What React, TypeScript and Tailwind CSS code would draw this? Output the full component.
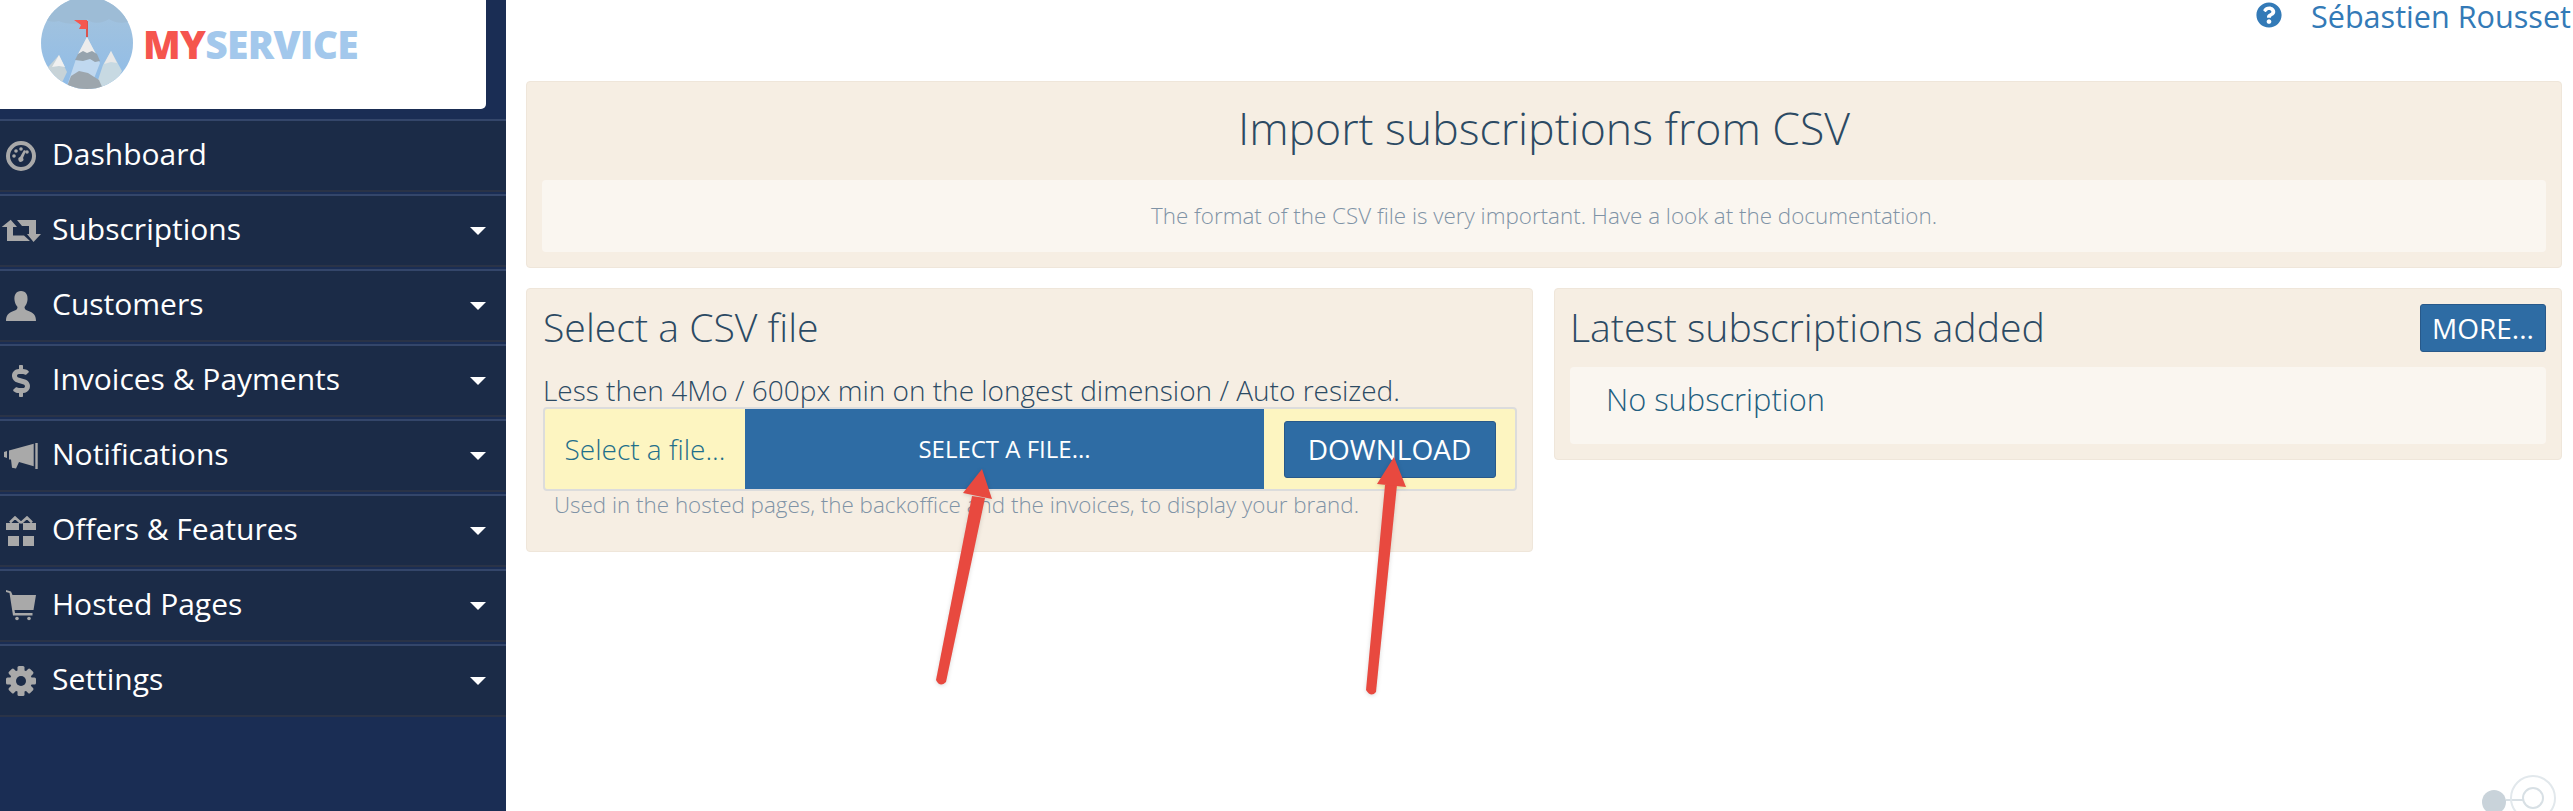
import React from "react";
import { ReactNode } from "react";
import { FaDollarSign, FaQuestionCircle } from "react-icons/fa";

const DashIcon = () => (
  <svg width="30" height="30" viewBox="0 0 30 30" fill="#a9a9a9">
    <path fillRule="evenodd" d="M15 0a15 15 0 1 1 0 30a15 15 0 0 1 0-30zm0 4a11 11 0 1 0 0 22a11 11 0 0 0 0-22z" />
    <circle cx="8" cy="15" r="1.8" />
    <circle cx="10" cy="10" r="1.8" />
    <circle cx="15" cy="8" r="1.8" />
    <circle cx="21" cy="11" r="1.8" />
    <path d="M18 9l2 1-3 7a2.500 2.500 0 1 1-3-1z" />
  </svg>
);

const RetweetIcon = () => (
  <svg width="42" height="26" viewBox="0 0 42 26" fill="#a9a9a9">
    <path d="M10.700 1.700L17 9H13V17.500H24L30 23H7V9H1.700z" />
    <path d="M17 2H36V16H41L33.500 24L27 16H29V8H22z" />
  </svg>
);

const UserIcon = () => (
  <svg width="30" height="30" viewBox="0 0 30 30" fill="#a9a9a9">
    <path d="M15 0c5 0 7 4 6.500 9c-.3 3-1.500 5-3 7c0 2 1 3 4 4c5 2 7.500 4 7.500 10H0c0-6 2.500-8 7.500-10c3-1 4-2 4-4c-1.500-2-2.700-4-3-7C8 4 10 0 15 0z" />
  </svg>
);

const HornIcon = () => (
  <svg width="34" height="26" viewBox="0 0 34 26" fill="#a9a9a9">
    <path d="M0 9l3-1v7l-3-1z" />
    <path d="M5 7.500L29.700 .7V23.300L15 19L12 25.500L8 24.700L7 16.500H5z" />
    <path d="M31.300 0h2.400v26h-2.400z" />
  </svg>
);

const GiftIcon = () => (
  <svg width="30" height="30" viewBox="0 0 30 30" fill="#a9a9a9">
    <path d="M15 7L9 1.500L4 6.500M15 7L21 1.500L26 6.500" fill="none" stroke="#a9a9a9" strokeWidth="2.500" />
    <path d="M0 7H13V14H0zM17 7H30V14H17z" />
    <path d="M2 20H13V30H2zM17 20H28V30H17z" />
  </svg>
);

const CartIcon = () => (
  <svg width="30" height="31" viewBox="0 0 30 31" fill="#a9a9a9">
    <path d="M0 0l5 1.500 1.500 3.500H30l-2.500 15H8.500l.5 3h17.500v2.500H7L3.500 3 0 2z" />
    <circle cx="11" cy="28.500" r="1.800" />
    <circle cx="23" cy="28.500" r="1.800" />
  </svg>
);

const CogIcon = () => (
  <svg width="30" height="30" viewBox="0 0 30 30" fill="#a9a9a9">
    {[0, 45, 90, 135].map((a) => (
      <rect key={a} x="11.500" y="0" width="7" height="30" rx="1.500" transform={`rotate(${a} 15 15)`} />
    ))}
    <circle cx="15" cy="15" r="11" />
    <circle cx="15" cy="15" r="5" fill="#1b2b47" />
  </svg>
);

type NavItem = { label: string; icon: ReactNode; caret?: boolean };

const items: NavItem[] = [
  { label: "Dashboard", icon: <DashIcon /> },
  { label: "Subscriptions", icon: <RetweetIcon />, caret: true },
  { label: "Customers", icon: <UserIcon />, caret: true },
  { label: "Invoices & Payments", icon: <FaDollarSign size={32} color="#a9a9a9" />, caret: true },
  { label: "Notifications", icon: <HornIcon />, caret: true },
  { label: "Offers & Features", icon: <GiftIcon />, caret: true },
  { label: "Hosted Pages", icon: <CartIcon />, caret: true },
  { label: "Settings", icon: <CogIcon />, caret: true },
];

const Logo = () => (
  <div className="relative h-[109px] w-[486px] rounded-br-[5px] bg-white">
    <svg className="absolute left-[41px] top-[-3px]" width="92" height="92" viewBox="0 0 92 92">
      <defs>
        <clipPath id="disc">
          <circle cx="46" cy="46" r="46" />
        </clipPath>
        <linearGradient id="sky" x1="0" y1="0" x2="0" y2="1">
          <stop offset="0" stopColor="#a6c4dc" />
          <stop offset="1" stopColor="#8fbce8" />
        </linearGradient>
      </defs>
      <g clipPath="url(#disc)">
        <rect width="92" height="92" fill="url(#sky)" />
        <path d="M0 0h92v22c-8 6-18 4-24 0c-6 4-16 6-22 0c-6 6-20 6-28 2c-6 2-12 0-18-4z" fill="#9dbcd6" />
        <path d="M35 62l11-22l13 26l-10 26H25z" fill="#c0d8ef" />
        <path d="M46 40l9 17l-5-2l-4 2l-4-2l-5 2z" fill="#ececec" />
        <path d="M37 57l5-3l4 2l5-2l5 3l3 7l-5 1l-5-3l-7 2l-8-1z" fill="#96a3ad" />
        <path d="M18 58l8 17l-8 17H0V78z" fill="#c7d3d8" />
        <path d="M18 58l6 12l-6-1l-7 1z" fill="#f0f0f0" />
        <path d="M70 54l11 20l-10 18H54l8-24z" fill="#c7d9e2" />
        <path d="M70 54l6 12l-6-1l-7 2z" fill="#e8e8e8" />
        <path d="M25 92l5-13l8-5l9 2l11 7l4 9z" fill="#9da6ad" />
      </g>
      <path d="M45 24h2v16h-2z" fill="#d9534f" />
      <path d="M33 23h13v9h-8l2-4z" fill="#f4574f" />
    </svg>
    <div className="absolute left-[143px] top-[20px] font-['Open_Sans',sans-serif] text-[39px] font-extrabold leading-[48px] tracking-[-0.7px]">
      <span className="text-[#f5554e]">MY</span>
      <span className="text-[#a3c8ec]">SERVICE</span>
    </div>
  </div>
);

export default function App() {
  return (
    <div className="flex h-[811px] overflow-hidden bg-white font-['Open_Sans',sans-serif]">
      <aside className="w-[506px] shrink-0 bg-[#1a2d54]">
        <Logo />
        <nav className="mt-[10px]">
          {items.map((it) => (
            <div
              key={it.label}
              className="mb-[2px] flex h-[73px] items-center border-t-2 border-b-2 border-t-[#34466a] border-b-[#2a3347] bg-[#1b2b47]"
            >
              <span className="flex w-[52px] shrink-0 items-center justify-center pr-[10px]">{it.icon}</span>
              <span className="mt-[-3px] text-[30px] leading-[40px] text-white">{it.label}</span>
              {it.caret && (
                <span className="ml-auto mr-[20px] h-0 w-0 border-x-[8px] border-t-[8px] border-x-transparent border-t-white" />
              )}
            </div>
          ))}
        </nav>
      </aside>

      <main className="relative min-w-0 flex-1 pl-[20px] pr-[11px] text-[#2c4a63]">
        <header className="flex h-[81px] items-start justify-end">
          <FaQuestionCircle size={26} color="#337ab7" className="mr-[29px] mt-[2px]" />
          <span className="mr-[-9px] whitespace-nowrap text-[30.600px] leading-[32px] text-[#337ab7]">Sébastien Rousset</span>
        </header>

        <section className="h-[187px] rounded-[4px] border border-[#efe6da] bg-[#f6eee3] px-[15px] pt-[16px]">
          <h1 className="text-center text-[44.6px] font-light leading-[60px] text-[#2c4a63]">Import subscriptions from CSV</h1>
          <div className="mt-[22px] flex h-[72px] items-center justify-center rounded-[4px] bg-[#faf6f0] text-[22.4px] font-light text-[#7f93a6]">
            The format of the CSV file is very important. Have a look at the documentation.
          </div>
        </section>

        <div className="mt-[20px] flex items-start gap-[21px]">
          <section className="h-[264px] w-[1007px] shrink-0 rounded-[4px] border border-[#efe6da] bg-[#f6eee3] px-[16px] pt-[13px]">
            <h2 className="text-[39.200px] font-light leading-[50px]">Select a CSV file</h2>
            <p className="mt-[21px] text-[28px] font-light leading-[34px]">Less then 4Mo / 600px min on the longest dimension / Auto resized.</p>
            <div className="flex h-[84px] w-[974px] items-stretch overflow-hidden rounded-[4px] border-2 border-[#dcdcdc] bg-[#fdf5c1]">
              <div className="flex w-[200px] items-center justify-center text-[28px] font-light text-[#1f6f8b]">Select a file...</div>
              <div className="flex w-[519px] items-center justify-center bg-[#2e6ca4] text-[24px] text-white">SELECT A FILE...</div>
              <div className="flex flex-1 items-center justify-center">
                <button className="h-[57px] w-[212px] rounded-[3px] border border-[#28598a] bg-[#2e6ca4] text-[28px] text-white">DOWNLOAD</button>
              </div>
            </div>
            <p className="ml-[11px] mt-[-3px] text-[22.400px] font-light leading-[34px] text-[#7f93a6]">Used in the hosted pages, the backoffice and the invoices, to display your brand.</p>
          </section>

          <section className="h-[172px] flex-1 rounded-[4px] border border-[#efe6da] bg-[#f6eee3] px-[15px] pt-[15px]">
            <div className="flex h-[48px] items-center justify-between">
              <h2 className="mt-[-2px] text-[39.200px] font-light leading-[50px]">Latest subscriptions added</h2>
              <button className="h-[48px] w-[126px] rounded-[3px] border border-[#28598a] bg-[#2e6ca4] text-[28px] text-white">MORE...</button>
            </div>
            <div className="mt-[15px] flex h-[77px] items-center rounded-[4px] bg-[#faf6f0] pb-[12px] pl-[36px] text-[30.800px] font-light text-[#1f5f80]">No subscription</div>
          </section>
        </div>

        {/* annotation arrows on top of the page */}
        <svg className="pointer-events-none absolute left-0 top-0 drop-shadow-sm" width="1100" height="720">
          <g fill="#e8493f">
            <path d="M430 680L466 496L479 498L440 682Q434 688 430 680z" />
            <path d="M476 469L457 493L486 499z" />
            <path d="M860 690L879 485L891 485L870 692Q865 698 860 690z" />
            <path d="M888 457L871 484L900 487z" />
          </g>
        </svg>

        {/* faint widget at the bottom right corner */}
        <svg className="absolute bottom-0 right-0" width="133" height="71" viewBox="0 0 133 71" fill="none">
          <circle cx="54" cy="62" r="12" fill="#c9d3da" />
          <path d="M66 60h18" stroke="#d8e0e5" strokeWidth="2" />
          <circle cx="93" cy="58" r="10" stroke="#d8e0e5" strokeWidth="2" />
          <circle cx="93" cy="58" r="22" stroke="#e2e8ec" strokeWidth="2" />
        </svg>
      </main>
    </div>
  );
}
